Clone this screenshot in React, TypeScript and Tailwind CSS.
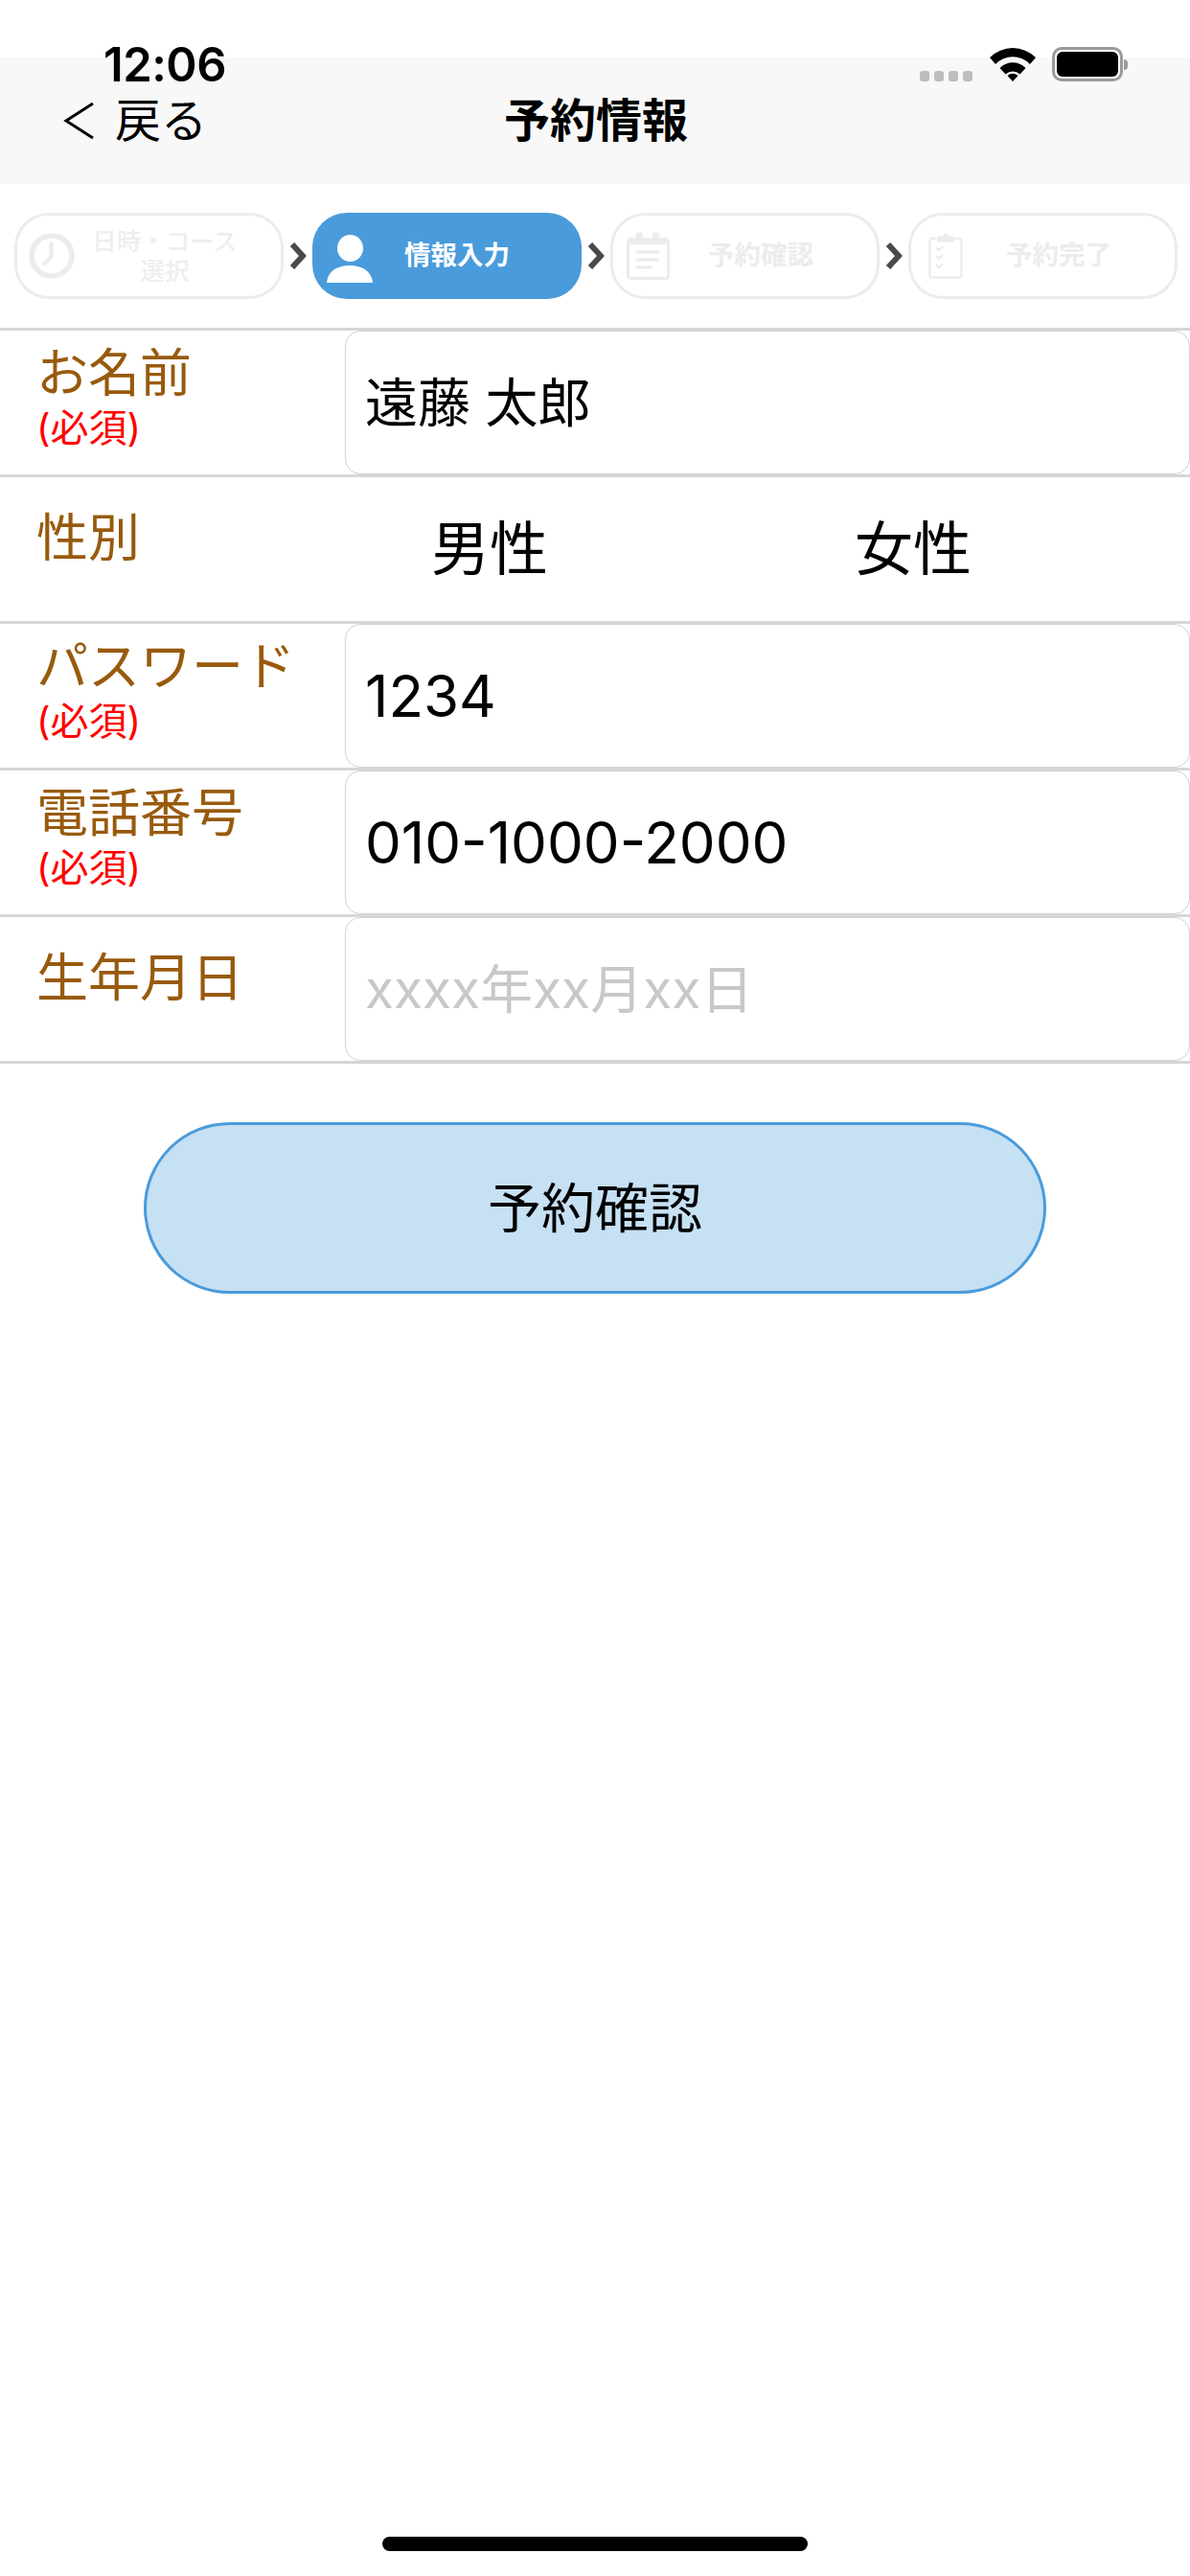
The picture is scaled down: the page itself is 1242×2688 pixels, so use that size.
const JP = "font-['Inter','Noto_Sans_CJK_JP',sans-serif]";

function Clock() {
  return (
    <svg width="48" height="48" viewBox="0 0 48 48" fill="none" stroke="#ebecec">
      <circle cx="24" cy="24" r="21" strokeWidth="5.5" />
      <path d="M23.5 11 V25 L16.5 32" strokeWidth="4" strokeLinecap="round" strokeLinejoin="round" />
    </svg>
  );
}

function Person() {
  return (
    <svg width="48" height="50" viewBox="0 0 48 50" fill="#ffffff">
      <ellipse cx="24.5" cy="14" rx="13.5" ry="14" />
      <path d="M0 50 C1 38 11 32 24 32 C37 32 47 38 48 50 Z" />
    </svg>
  );
}

function Calendar() {
  return (
    <svg width="45" height="50" viewBox="0 0 45 50" fill="none">
      <rect x="1.5" y="7.5" width="42" height="41" rx="3" stroke="#ebecec" strokeWidth="3" />
      <rect x="1" y="7" width="43" height="6" fill="#ebecec" />
      <rect x="9.5" y="0.5" width="7" height="12" rx="2" fill="#ebecec" />
      <rect x="27" y="0.5" width="7" height="12" rx="2" fill="#ebecec" />
      <path d="M10 21 H34 M10 29 H34 M10 37 H27" stroke="#ebecec" strokeWidth="3" />
    </svg>
  );
}

function Clipboard() {
  return (
    <svg width="36" height="48" viewBox="0 0 36 48" fill="none" stroke="#ebecec">
      <path d="M8 6 H3 A2 2 0 0 0 1.5 8 V45 A2 2 0 0 0 3 46.5 H33 A2 2 0 0 0 34.5 45 V8 A2 2 0 0 0 33 6 H28" strokeWidth="2.5" />
      <rect x="9" y="4" width="18" height="5" rx="2" fill="#ebecec" strokeWidth="1" />
      <circle cx="18" cy="3" r="2.5" fill="#ebecec" strokeWidth="0" />
      <path d="M8 15 L11 18 L15 14 M8 24 L11 27 L15 23 M8 33 L11 36 L15 32" strokeWidth="2" />
    </svg>
  );
}

function Chevron() {
  return (
    <svg width="18" height="28" viewBox="0 0 18 28" fill="none" className="shrink-0">
      <path d="M3 2 L14 14 L3 26" stroke="#4a4a4a" strokeWidth="6" />
    </svg>
  );
}

function Wifi() {
  return (
    <svg width="48" height="36" viewBox="0 0 48 36" fill="#000000">
      <path d="M0 11 A34 34 0 0 1 48 11 L42 18 A25 25 0 0 0 6 18 Z" />
      <path d="M10.5 22 A19 19 0 0 1 37.5 22 L31.5 28.5 A11 11 0 0 0 16.5 28.5 Z" />
      <path d="M18.5 30 A8 8 0 0 1 29.5 30 L24 36 Z" />
    </svg>
  );
}

function Step({ icon, label, active }: { icon: React.ReactNode; label: React.ReactNode; active?: boolean }) {
  return (
    <div
      className={`w-[281px] h-[90px] shrink-0 rounded-[36px] flex items-center ${
        active ? "bg-[#4a9bdb] text-white pl-[15px] pr-[42px]" : "border-[3px] border-[#ebecec] bg-white text-[#ebecec] pl-[12px] pr-[27px]"
      }`}
    >
      <div className={`w-[48px] flex justify-center shrink-0 ${active ? "mt-[6px]" : ""}`}>{icon}</div>
      <div className="flex-1 text-center">{label}</div>
    </div>
  );
}

function Label({ text, required }: { text: string; required?: boolean }) {
  return (
    <div className={`w-[360px] shrink-0 pl-[38px] ${required ? "pt-[15px]" : "pt-[34px]"}`}>
      <div className="text-[54px] leading-[60px] text-[#985a0c]">{text}</div>
      {required && <div className="text-[40px] leading-[44px] text-[#ff0000] mt-[5px]">(必須)</div>}
    </div>
  );
}

function Field({ label, required, value, placeholder, digits }: { label: string; required?: boolean; value: string; placeholder?: boolean; digits?: boolean }) {
  return (
    <div className="h-[150px] flex">
      <Label text={label} required={required} />
      <div
        className={`w-[890px] h-[150px] border border-[#d2d2d2] rounded-[16px] flex items-center pl-[20px] ${
          digits ? "text-[60px]" : "text-[55px]"
        } ${placeholder ? "text-[#c8c8cc]" : "text-black"}`}
      >
        {value}
      </div>
    </div>
  );
}

function Line() {
  return <div className="h-[3px] bg-[#d6d6d6]" />;
}

export default function App() {
  return (
    <div className={`relative w-[1242px] h-[2688px] bg-white overflow-hidden ${JP}`}>
      <div className="h-[60px]" />
      <div className="h-[132px] bg-[#f8f8f8] relative flex items-center justify-center">
        <div className="absolute left-[64px] top-[38px] text-[48px] leading-[56px] text-black flex items-center">
          <svg width="36" height="40" viewBox="0 0 36 40" fill="none" className="mr-[20px]">
            <path d="M33 2 L5 20 L33 38" stroke="#000" strokeWidth="3" />
          </svg>
          戻る
        </div>
        <div className="text-[48px] leading-[56px] font-bold text-black -mt-[1px] ml-[2px]">予約情報</div>
      </div>

      <div className="h-[150px] pt-[30px] pl-[15px] flex items-start">
        <Step icon={<Clock />} label={<span className="block text-[25.5px] leading-[31px] font-medium text-[#eeeeee]">日時・コース<br />選択</span>} />
        <div className="w-[30px] h-[90px] flex items-center justify-center"><Chevron /></div>
        <Step active icon={<Person />} label={<span className="text-[27.5px] font-bold">情報入力</span>} />
        <div className="w-[30px] h-[90px] flex items-center justify-center"><Chevron /></div>
        <Step icon={<Calendar />} label={<span className="text-[27.5px] font-bold">予約確認</span>} />
        <div className="w-[30px] h-[90px] flex items-center justify-center"><Chevron /></div>
        <Step icon={<Clipboard />} label={<span className="text-[27.5px] font-bold">予約完了</span>} />
      </div>

      <Line />
      <Field label="お名前" required value="遠藤 太郎" />
      <Line />
      <div className="h-[150px] flex">
        <Label text="性別" />
        <div className="flex-1 flex items-center text-[61px] text-black pl-[90px] gap-[320px] pt-[2px]">
          <span>男性</span>
          <span>女性</span>
        </div>
      </div>
      <Line />
      <Field label="パスワード" required value="1234" digits />
      <Line />
      <Field label="電話番号" required value="010-1000-2000" digits />
      <Line />
      <Field label="生年月日" value="xxxx年xx月xx日" placeholder />
      <Line />

      <div className="mt-[61px] mx-auto w-[942px] h-[179px] rounded-[90px] border-[3px] border-[#4a9bdb] bg-[#c6e0f4] flex items-center justify-center text-[56px] text-black">
        予約確認
      </div>

      <div className="absolute z-10 left-[108px] top-[40px] text-[49px] leading-[56px] font-semibold text-black tracking-[-0.5px]">12:06</div>
      <div className="absolute z-10 left-[960px] top-[74px] flex gap-[5px]">
        {[0, 1, 2, 3].map((i) => (
          <div key={i} className="w-[10px] h-[11px] rounded-[3px] bg-[#bdbdbd]" />
        ))}
      </div>
      <div className="absolute z-10 left-[1033px] top-[49px]"><Wifi /></div>
      <div className="absolute z-10 left-[1098px] top-[49px] w-[74px] h-[36px] rounded-[10px] border-[3px] border-[#9a9a9a] p-[2px]">
        <div className="w-full h-full rounded-[6px] bg-black" />
      </div>
      <div className="absolute z-10 left-[1173px] top-[62px] w-[4px] h-[11px] rounded-r-[4px] bg-[#9a9a9a]" />

      <div className="absolute left-[399px] top-[2647px] w-[444px] h-[15px] rounded-full bg-black" />
    </div>
  );
}
